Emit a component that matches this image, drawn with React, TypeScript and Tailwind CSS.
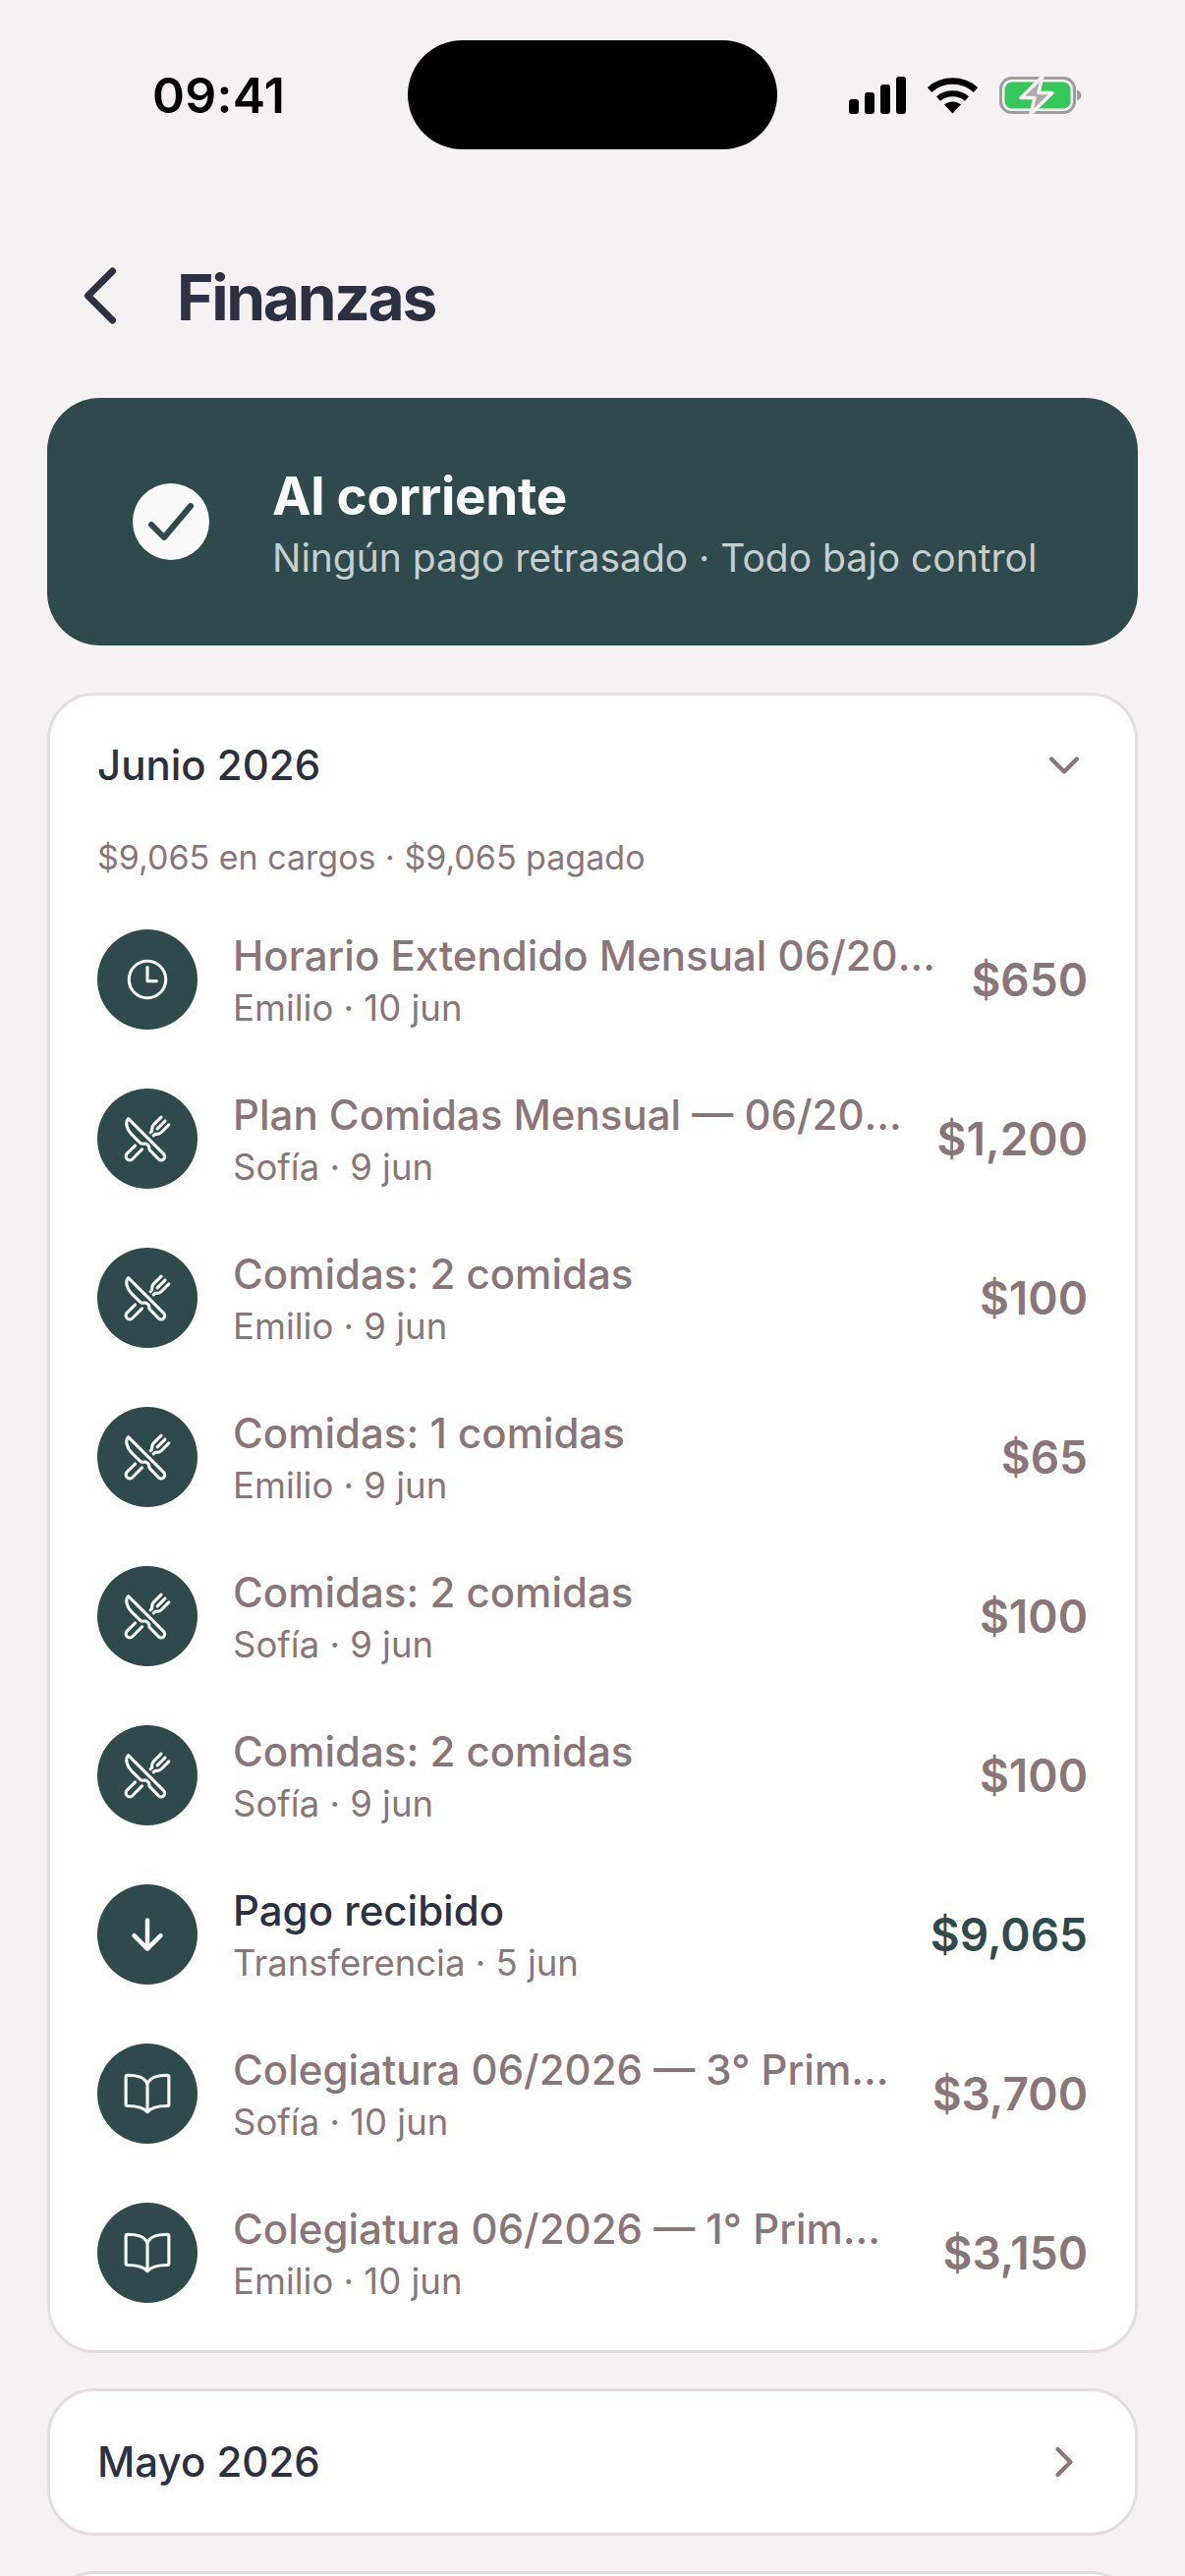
import React from "react";
import {
  IoChevronDown,
  IoChevronForward,
  IoTimeOutline,
  IoRestaurantOutline,
  IoArrowDown,
  IoBookOutline,
} from "react-icons/io5";

type Row = {
  icon: "time" | "food" | "down" | "book";
  title: string;
  sub: string;
  amount: string;
  paid?: boolean;
  narrow?: boolean;
};

const rows: Row[] = [
  { icon: "time", title: "Horario Extendido Mensual 06/2026", sub: "Emilio · 10 jun", amount: "$650" },
  { icon: "food", title: "Plan Comidas Mensual — 06/2026", sub: "Sofía · 9 jun", amount: "$1,200" },
  { icon: "food", title: "Comidas: 2 comidas", sub: "Emilio · 9 jun", amount: "$100" },
  { icon: "food", title: "Comidas: 1 comidas", sub: "Emilio · 9 jun", amount: "$65" },
  { icon: "food", title: "Comidas: 2 comidas", sub: "Sofía · 9 jun", amount: "$100" },
  { icon: "food", title: "Comidas: 2 comidas", sub: "Sofía · 9 jun", amount: "$100" },
  { icon: "down", title: "Pago recibido", sub: "Transferencia · 5 jun", amount: "$9,065", paid: true },
  { icon: "book", title: "Colegiatura 06/2026 — 3° Primaria", sub: "Sofía · 10 jun", amount: "$3,700" },
  { icon: "book", title: "Colegiatura 06/2026 — 1° Primaria", sub: "Emilio · 10 jun", amount: "$3,150", narrow: true },
];

function RowIcon({ icon }: { icon: Row["icon"] }) {
  if (icon === "time") return <IoTimeOutline className="text-[50px] text-[#fafafa]" />;
  if (icon === "food") return <IoRestaurantOutline className="text-[50px] text-[#fafafa]" />;
  if (icon === "down") return <IoArrowDown className="text-[48px] text-[#fafafa]" />;
  return <IoBookOutline className="text-[50px] text-[#fafafa]" />;
}

function StatusIcons() {
  return (
    <div className="ml-[73px] flex items-center">
      <svg width="58" height="38" viewBox="0 0 58 38" fill="#000">
        <rect x="0" y="23" width="10" height="15" rx="3" />
        <rect x="16" y="16" width="10" height="22" rx="3" />
        <rect x="32" y="8" width="10" height="30" rx="3" />
        <rect x="48" y="0" width="10" height="38" rx="3" />
      </svg>
      <svg className="ml-[22px]" width="51" height="38" viewBox="0 0 51 38" fill="none">
        <path d="M2 13.5C15 1.5 36 1.5 49 13.5" stroke="#000" strokeWidth="6.5" strokeLinecap="butt" />
        <path d="M11 22.5C19 15.5 32 15.5 40 22.5" stroke="#000" strokeWidth="6" strokeLinecap="butt" />
        <path d="M25.5 37.5L17 28.5C22 24.6 29 24.6 34 28.5Z" fill="#000" />
      </svg>
      <svg className="ml-[22px]" width="84" height="42" viewBox="0 0 84 42" fill="none">
        <rect x="1.5" y="3.5" width="75" height="35" rx="11" stroke="#a09d9e" strokeWidth="3" />
        <rect x="5.5" y="7.5" width="67" height="27" rx="7.5" fill="#34c759" />
        <path d="M79 15.5c3 1 4.5 3 4.5 5.5s-1.5 4.5-4.5 5.5Z" fill="#a09d9e" />
        <path
          d="M44 2L22 23.5H36L32 40L54 18.5H40Z"
          fill="#adaaab"
          stroke="#f6f2f3"
          strokeWidth="3.5"
          strokeLinejoin="round"
        />
      </svg>
    </div>
  );
}

export default function App() {
  return (
    <div className="h-[2622px] w-[1206px] overflow-hidden bg-[#f6f2f3] font-['Inter',sans-serif]">
      <div className="mt-[41px] flex h-[111px] items-center">
        <div className="w-[415px] pl-[155px] text-[50px] font-semibold leading-none tracking-[0.3px] text-black">09:41</div>
        <div className="h-[111px] w-[376px] rounded-[56px] bg-black" />
        <StatusIcons />
      </div>

      <div className="mt-[99px] flex h-[100px] items-center pl-[84px]">
        <svg width="38" height="60" viewBox="0 0 38 60" fill="none">
          <path d="M30.5 5L5.5 30L30.5 55" stroke="#2b3042" strokeWidth="7" strokeLinecap="round" strokeLinejoin="round" />
        </svg>
        <h1 className="ml-[58px] pt-[3px] text-[64px] font-bold leading-none tracking-[-2.3px] text-[#2b3042]">Finanzas</h1>
      </div>

      <div className="mx-[48px] mt-[54px] flex h-[252px] items-center rounded-[54px] bg-[#2f4a4d] pl-[87px]">
        <div className="flex h-[78px] w-[78px] items-center justify-center rounded-full bg-[#fafafa]">
          <svg width="46" height="38" viewBox="0 0 46 38" fill="none">
            <path d="M3 22L16 35L43 3" stroke="#2f4a4d" strokeWidth="6" strokeLinecap="round" strokeLinejoin="round" />
          </svg>
        </div>
        <div className="ml-[64px] pt-[3px]">
          <div className="text-[53px] font-bold leading-[62px] tracking-[-0.3px] text-[#fafafa]">Al corriente</div>
          <div className="mt-[8px] text-[39px] leading-[48px] text-[#fafafa]/75">Ningún pago retrasado · Todo bajo control</div>
        </div>
      </div>

      <div className="mx-[48px] mt-[48px] rounded-[48px] border-[3px] border-[#e5dcdf] bg-white px-[48px] pb-[48px]">
        <div className="flex h-[122px] items-center justify-between pt-[20px]">
          <div className="text-[42px] font-medium leading-none text-[#2b3042]">Junio 2026</div>
          <IoChevronDown className="mr-[1px] text-[46px] text-[#8a7678]" />
        </div>
        <div className="mt-[23px] text-[34px] leading-[40px] text-[#8a7678]">$9,065 en cargos · $9,065 pagado</div>
        <div className="mt-[53px] flex flex-col gap-[60px]">
          {rows.map((r, i) => (
            <div key={i} className="flex h-[102px] items-center">
              <div className="flex h-[102px] w-[102px] shrink-0 items-center justify-center rounded-full bg-[#2f4a4d]">
                <RowIcon icon={r.icon} />
              </div>
              <div className="ml-[36px] min-w-0 flex-1">
                <div className={`truncate text-[42px] font-medium leading-[52px] ${r.narrow ? "pr-[24px]" : ""} ${r.paid ? "text-[#2b3042]" : "text-[#8a7678]"}`}>{r.title}</div>
                <div className="mt-[5px] truncate text-[36.5px] leading-[44px] text-[#8a7678]">{r.sub}</div>
              </div>
              <div className={`ml-[33px] shrink-0 text-[46px] font-semibold leading-none ${r.paid ? "text-[#2f4a4d]" : "text-[#8a7678]"}`}>{r.amount}</div>
            </div>
          ))}
        </div>
      </div>

      <div className="mx-[48px] mt-[36px] flex h-[150px] items-center justify-between rounded-[48px] border-[3px] border-[#e5dcdf] bg-white px-[48px]">
        <div className="text-[42px] font-medium leading-none text-[#2b3042]">Mayo 2026</div>
        <IoChevronForward className="mr-[1px] text-[46px] text-[#8a7678]" />
      </div>

      <div className="mx-[48px] mt-[36px] h-[150px] rounded-[48px] border-[3px] border-[#e5dcdf] bg-white" />
    </div>
  );
}
